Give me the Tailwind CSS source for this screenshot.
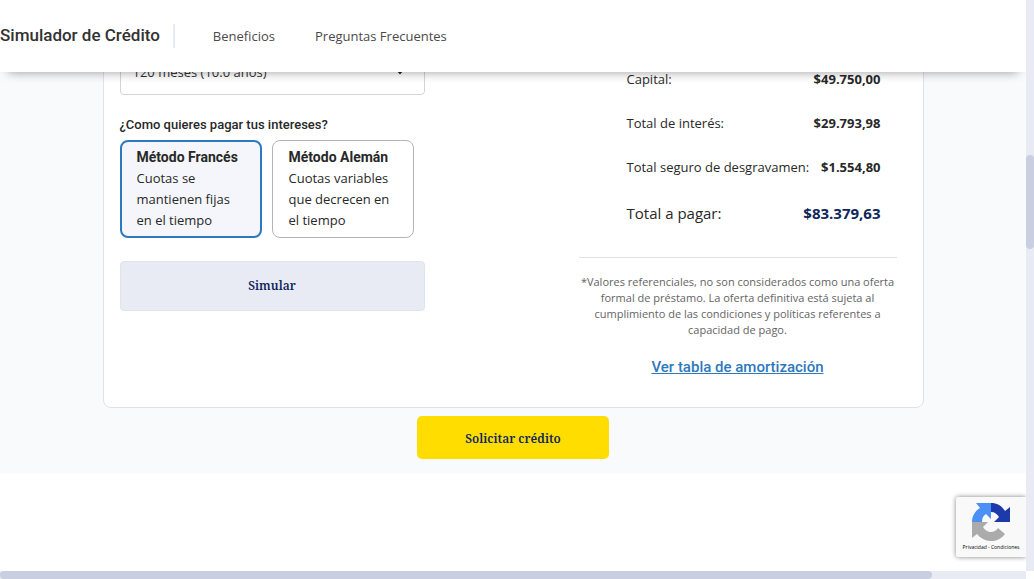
<!DOCTYPE html>
<html lang="es">
<head>
<meta charset="utf-8">
<meta name="viewport" content="width=device-width, initial-scale=1">
<title>Simulador de Crédito</title>
<script src="https://cdn.jsdelivr.net/npm/@tailwindcss/browser@4"></script>
</head>
<body class="grid h-screen grid-cols-[minmax(0,1fr)_8px] grid-rows-[minmax(0,1fr)_8px] overflow-hidden bg-white font-['Open_Sans',sans-serif] text-[13px] text-[#282828]">
  <div class="relative overflow-hidden">
    <header class="relative z-10 flex h-18 items-center bg-white text-[#323232] shadow-[0_8px_10px_-8px_rgba(0,0,0,0.4)]">
      <h1 class="font-['Roboto',sans-serif] text-[17px] font-medium whitespace-nowrap">Simulador de Crédito</h1>
      <span class="ml-[13px] h-6 w-0.5 bg-[#e8ebf3]"></span>
      <nav class="ml-[38px] flex gap-10 pt-0.5">
        <a href="#beneficios" class="text-[#4a4a4a]">Beneficios</a>
        <a href="#preguntas" class="text-[#4a4a4a]">Preguntas Frecuentes</a>
      </nav>
    </header>

    <main class="-mt-11 flex flex-col items-center bg-[#f9fafc] pb-3.5">
      <section class="grid w-full max-w-[821px] grid-cols-[305px_318px] justify-between rounded-lg border border-[#dfe2ed] bg-white pt-4 pr-[26px] pb-7 pl-4">
        <form>
          <div class="relative">
            <select aria-label="Plazo" class="block h-[50px] w-full appearance-none rounded border border-[#d4d4d6] bg-white pt-1.5 pl-3 text-[#323232]">
              <option>120 meses (10.0 años)</option>
            </select>
            <svg class="pointer-events-none absolute top-5 right-5 h-2.5 w-2.5" viewBox="0 0 10 10" aria-hidden="true"><path d="M1 5h8L5 9.500z" fill="#222"/></svg>
          </div>
          <fieldset class="mt-5">
            <legend class="pb-[5px] font-['Roboto',sans-serif] text-[13px] leading-5 font-medium">¿Como quieres pagar tus intereses?</legend>
            <div class="flex gap-2.5">
              <label class="h-[98px] w-[142px] rounded-lg border-2 border-[#2e78bd] bg-[#f4f6fb] py-[5px] pr-3.5 pl-[15px] leading-[21px]">
                <input type="radio" name="metodo" class="sr-only" checked>
                <strong class="block font-['Roboto',sans-serif] text-sm leading-[21px] font-bold">Método Francés</strong>Cuotas se mantienen fijas en el tiempo
              </label>
              <label class="h-[98px] w-[142px] rounded-lg border border-[#b4b4b4] bg-white py-1.5 pr-4 pl-4 leading-[21px]">
                <input type="radio" name="metodo" class="sr-only">
                <strong class="block font-['Roboto',sans-serif] text-sm leading-[21px] font-bold">Método Alemán</strong>Cuotas variables que decrecen en el tiempo
              </label>
            </div>
          </fieldset>
          <button type="button" class="mt-[23px] h-[50px] w-full rounded border border-[#dfe3ef] bg-[#e8ebf3] font-['Noto_Serif','Liberation_Serif',serif] text-xs font-semibold text-[#0f265c]">Simular</button>
        </form>

        <aside>
          <dl class="flex flex-col gap-6 border-b border-[#dfe2ed] pt-6 pr-4 pb-8 pl-12 leading-5">
            <div class="flex justify-between"><dt>Capital:</dt><dd class="font-bold">$49.750,00</dd></div>
            <div class="flex justify-between"><dt>Total de interés:</dt><dd class="font-bold">$29.793,98</dd></div>
            <div class="flex justify-between"><dt>Total seguro de desgravamen:</dt><dd class="font-bold">$1.554,80</dd></div>
            <div class="flex justify-between text-[15px] leading-6"><dt>Total a pagar:</dt><dd class="font-bold text-[#0f265c]">$83.379,63</dd></div>
          </dl>
          <p class="mt-4 text-center text-[11px] leading-4 text-[#646464]">*Valores referenciales, no son considerados como una oferta formal de préstamo. La oferta definitiva está sujeta al cumplimiento de las condiciones y políticas referentes a capacidad de pago.</p>
          <p class="mt-[17px] text-center font-['Roboto',sans-serif] text-[15px] leading-6"><a href="#amortizacion" class="font-medium text-[#2e78bd] underline">Ver tabla de amortización</a></p>
        </aside>
      </section>
      <button type="button" class="mt-2 h-[43px] w-48 rounded-[5px] bg-[#ffdd00] pt-0.5 font-['Noto_Serif','Liberation_Serif',serif] text-xs font-semibold text-[#0f265c]">Solicitar crédito</button>
    </main>

    <div class="absolute right-0 bottom-3.5 flex h-[60px] w-[70px] flex-col items-center overflow-hidden rounded-l-xs bg-[#f9f9f9] pt-1.5 shadow-[0_0_5px_gray]">
      <svg class="h-[38px] w-[38px]" viewBox="0 0 38 38" aria-hidden="true">
        <path d="M19 0C25 0 30 3 33 8L38 4v15H22l5-5c-2-3-4-5-8-5z" fill="#1c3aa9"/>
        <path d="M19 0v16l-5-5c-3 2-4 4-4 8H0C0 13 3 8 8 5L4 0z" fill="#4a90f5"/>
        <path d="M0 19h16l-5 5c4 7 12 6 15 1l7 6C26 41 12 40 5 31L0 35z" fill="#ababab"/>
      </svg>
      <p class="mt-0.5 text-[5px] leading-2 whitespace-nowrap text-black"><a href="#privacidad">Privacidad</a> - <a href="#condiciones">Condiciones</a></p>
    </div>
  </div>
  <div class="bg-[#e8ebf3] pt-[155px]"><div class="h-[94px] rounded-full bg-[#c9cee1]"></div></div>
  <div class="bg-[#e8ebf3]"><div class="h-2 w-[932px] rounded-full bg-[#c9cee1]"></div></div>
</body>
</html>
